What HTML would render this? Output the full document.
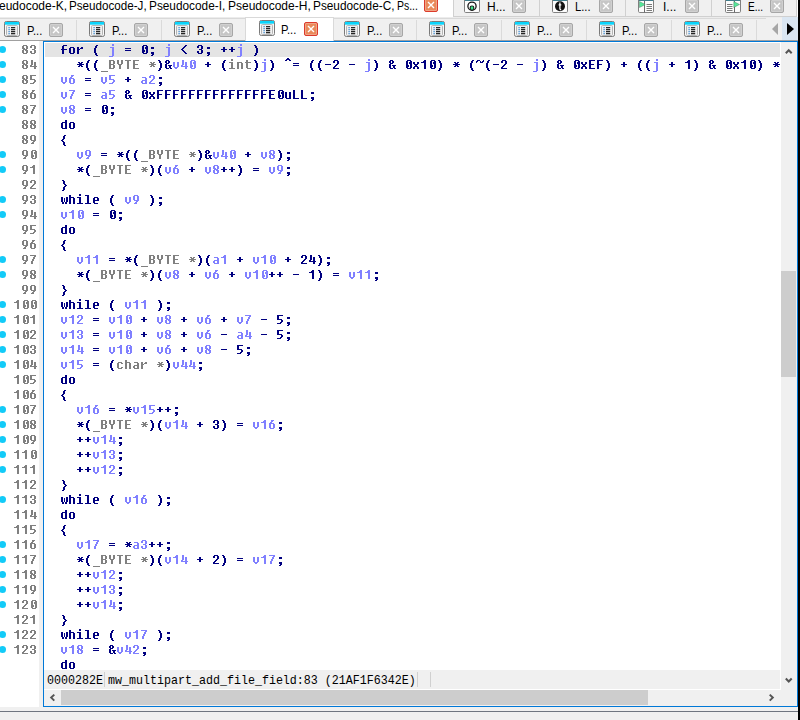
<!DOCTYPE html>
<html><head><meta charset="utf-8"><style>
*{margin:0;padding:0;box-sizing:border-box}
html,body{width:800px;height:720px;overflow:hidden;background:#f0f0f0;position:relative}
div,svg{position:absolute}
.ui{font-family:"Liberation Sans",sans-serif;font-size:12px;color:#000}
#top{left:0;top:0;width:800px;height:17px;background:#fff}
.title{top:-1px;white-space:nowrap;font-family:"Liberation Sans",sans-serif;font-size:12px;line-height:15px;color:#000}
.ttab{top:-4px;height:21px;background:#f0f0f0;border:1px solid #d0d0d0;border-top:none}
#row2{left:0;top:17px;width:800px;height:24px;background:#f0f0f0;border-top:1px solid #ececec}
#row2line{left:0;top:18px;width:766px;height:1px;background:#d9d9d9}
.sep{top:20px;width:1px;height:20px;background:#dadada}
.tt{font-family:"Liberation Sans",sans-serif;font-size:12px;line-height:14px;color:#000;white-space:nowrap}
.cb{width:14px;height:14px;background:#c6c6c6;border:1px solid #a6a6a6;border-radius:2px;box-shadow:inset 0 0 0 1px #d0d0d0}
.cb svg{left:-1px;top:-1px}
.cb.red{background:#e98a5a;border-color:#dc3b2b;box-shadow:inset 0 0 0 1px #f0a486}
.act2{left:245px;top:17px;width:89px;height:24px;background:#fff;border:1px solid #d9d9d9;border-bottom:none}
#hline{left:0;top:40px;width:798px;height:1px;background:#a0a0a0}
#frame{left:43px;top:41px;width:755px;height:666px;border:1px solid #0078d7;background:#fff}
#gut{left:0;top:41px;width:39px;height:666px;background:#fff}
#gstrip{left:39px;top:41px;width:4px;height:666px;background:#f0f0f0}
#black{left:798px;top:0;width:2px;height:720px;background:#000}
#bline{left:0;top:711px;width:798px;height:1px;background:#6f7580}
#code{left:45px;top:42px;width:735px;height:628px;overflow:hidden;background:#fff}
#hl{left:0;top:1px;width:735px;height:14px;background:#e4e4e4}
.cl{left:0;top:1px;font-family:"Liberation Mono",monospace;font-size:13.333px;line-height:15px;font-weight:bold;color:#000080;white-space:pre}
.ln{position:relative;height:15px}
.cl b{color:#6a6aff;font-weight:bold}
.cl i{color:#808080;font-style:normal}
#gnums{left:0;top:43px;width:37px;font-family:"Liberation Mono",monospace;font-size:13.333px;line-height:15px;font-weight:bold;color:#808080;text-align:right}
.gn{position:relative;height:15px}
.dot{left:-1px;width:7px;height:7px;border-radius:50%;background:#12cbf8}
#pix{left:0;top:0;width:800px;height:720px;clip-path:inset(42px 19px 50px 0)}
#vsb{left:781px;top:42px;width:16px;height:664px;background:#f0f0f0}
#thumb{left:781px;top:271px;width:15px;height:106px;background:#cdcdcd}
#status{left:44px;top:670px;width:736px;height:19px;background:#f0f0f0}
.st{top:674px;font-family:"Liberation Mono",monospace;font-size:11.667px;line-height:12px;transform:scaleY(1.06);transform-origin:0 0;color:#000;white-space:pre}
.ssep{top:672px;width:1px;height:15px;background:#d0d0d0}
#hsb{left:44px;top:690px;width:753px;height:16px;background:#f0f0f0}
#hthumb{left:61px;top:690px;width:587px;height:15px;background:#cdcdcd}
</style></head><body>
<div id="top"></div>
<div class="title" style="left:-15px">Pseudocode-K,</div><div class="title" style="left:69px;transform:scaleX(0.97);transform-origin:0 0">Pseudocode-J,</div><div class="title" style="left:149px;transform:scaleX(0.985);transform-origin:0 0">Pseudocode-I,</div><div class="title" style="left:228px">Pseudocode-H,</div><div class="title" style="left:313px;transform:scaleX(0.985);transform-origin:0 0">Pseudocode-C,</div><div class="title" style="left:396.5px;transform:scaleX(0.87);transform-origin:0 0">Ps...</div>
<div class="cb red" style="left:424px;top:-2px"><svg width="14" height="14" viewBox="0 0 14 14"><path d="M4 4L10 10M10 4L4 10" stroke="#fff" stroke-width="1.4"/></svg></div>
<div class="ttab" style="left:453px;width:87px"></div>
<div class="ttab" style="left:539px;width:87px"></div>
<div class="ttab" style="left:625px;width:87px"></div>
<div class="ttab" style="left:711px;width:86px"></div>
<div class="tt" style="left:487px;top:0px">H...</div>
<div class="tt" style="left:575px;top:0px;transform:scaleX(0.93);transform-origin:0 0">L...</div>
<div class="tt" style="left:663px;top:0px">I...</div>
<div class="tt" style="left:748px;top:0px;transform:scaleX(0.84);transform-origin:0 0">E...</div>
<div class="cb" style="left:512px;top:-1px"><svg width="14" height="14" viewBox="0 0 14 14"><path d="M4 4L10 10M10 4L4 10" stroke="#fff" stroke-width="1.4"/></svg></div><div class="cb" style="left:599px;top:-1px"><svg width="14" height="14" viewBox="0 0 14 14"><path d="M4 4L10 10M10 4L4 10" stroke="#fff" stroke-width="1.4"/></svg></div><div class="cb" style="left:685px;top:-1px"><svg width="14" height="14" viewBox="0 0 14 14"><path d="M4 4L10 10M10 4L4 10" stroke="#fff" stroke-width="1.4"/></svg></div><div class="cb" style="left:770px;top:-1px"><svg width="14" height="14" viewBox="0 0 14 14"><path d="M4 4L10 10M10 4L4 10" stroke="#fff" stroke-width="1.4"/></svg></div>
<svg style="left:464px;top:-3px" width="16" height="16" viewBox="0 0 16 16"><rect x="0.5" y="0.5" width="15" height="15" rx="1.2" fill="#fcfcfc" stroke="#808080"/><rect x="1" y="1" width="14" height="3" fill="#3f7d8c"/><circle cx="8" cy="9.2" r="4.1" fill="none" stroke="#151515" stroke-width="1.3"/><circle cx="8" cy="11" r="2.4" fill="#151515"/><ellipse cx="8" cy="11" rx="1.4" ry="1.8" fill="#3ee08a"/></svg>
<svg style="left:552px;top:-3px" width="16" height="16" viewBox="0 0 16 16"><rect x="0.5" y="0.5" width="15" height="15" rx="1.2" fill="#fcfcfc" stroke="#808080"/><rect x="1" y="1" width="14" height="3" fill="#3f7d8c"/><circle cx="8" cy="9.3" r="5" fill="#111"/><path d="M7.9 5.6V11.6Q7.9 12.8 9.2 12.6M6.6 7.8H9.3" fill="none" stroke="#fff" stroke-width="1.3"/></svg>
<svg style="left:638px;top:-3px" width="16" height="16" viewBox="0 0 16 16"><rect x="0.5" y="0.5" width="15" height="15" rx="1.2" fill="#fcfcfc" stroke="#808080"/><rect x="1" y="1" width="14" height="3" fill="#3f7d8c"/><path d="M6.5 4V15.5" stroke="#6a6a6a"/><path d="M1.5 4.5V10.5L7.2 7.5Z" fill="#55e89a" stroke="#3a6a50" stroke-width="0.4"/><path d="M8.5 7.5h5.5M8.5 9.5h5.5M8.5 11.5h5.5M8.5 13.5h5.5" stroke="#7a7a7a" stroke-width="1.1"/></svg>
<svg style="left:725px;top:-3px" width="16" height="16" viewBox="0 0 16 16"><rect x="0.5" y="0.5" width="15" height="15" rx="1.2" fill="#fcfcfc" stroke="#808080"/><rect x="1" y="1" width="14" height="3" fill="#3f7d8c"/><path d="M9.5 4V15.5" stroke="#6a6a6a"/><path d="M2 7.5h5.5M2 9.5h5.5M2 11.5h5.5M2 13.5h5.5" stroke="#7a7a7a" stroke-width="1.1"/><path d="M8.8 4.5V10.5L14.5 7.5Z" fill="#55e89a" stroke="#3a6a50" stroke-width="0.4"/></svg>
<div id="row2"></div>
<div id="row2line"></div>
<svg class="ic" style="left:4px;top:21px" width="16" height="16" viewBox="0 0 16 16">
<rect x="0.5" y="0.5" width="15" height="15" rx="1.8" fill="#fafafa" stroke="#7a7a7a"/>
<rect x="1" y="1" width="14" height="2.7" fill="#0ad4fb"/>
<rect x="2.5" y="4.5" width="11" height="10" rx="1" fill="#ececec" stroke="#b4b4b4"/>
<rect x="3.5" y="5.5" width="9" height="8" fill="#f3f3f3"/>
<rect x="4.3" y="5.95" width="1.6" height="1.4" rx="0.7" fill="#3a8ad0"/><rect x="7" y="6" width="4.2" height="1.3" fill="#262626"/><rect x="4.3" y="7.95" width="1.6" height="1.4" rx="0.7" fill="#3a8ad0"/><rect x="7" y="8" width="4.2" height="1.3" fill="#262626"/><rect x="4.3" y="9.95" width="1.6" height="1.4" rx="0.7" fill="#3a8ad0"/><rect x="7" y="10" width="4.2" height="1.3" fill="#262626"/><rect x="4.3" y="11.95" width="1.6" height="1.4" rx="0.7" fill="#3a8ad0"/><rect x="7" y="12" width="4.2" height="1.3" fill="#262626"/>
</svg><div class="tt" style="left:27px;top:24px;transform:scaleX(0.93);transform-origin:0 0">P...</div><div class="cb" style="left:49px;top:23px"><svg width="14" height="14" viewBox="0 0 14 14"><path d="M4 4L10 10M10 4L4 10" stroke="#fff" stroke-width="1.4"/></svg></div><div class="sep" style="left:76px"></div><svg class="ic" style="left:89px;top:21px" width="16" height="16" viewBox="0 0 16 16">
<rect x="0.5" y="0.5" width="15" height="15" rx="1.8" fill="#fafafa" stroke="#7a7a7a"/>
<rect x="1" y="1" width="14" height="2.7" fill="#0ad4fb"/>
<rect x="2.5" y="4.5" width="11" height="10" rx="1" fill="#ececec" stroke="#b4b4b4"/>
<rect x="3.5" y="5.5" width="9" height="8" fill="#f3f3f3"/>
<rect x="4.3" y="5.95" width="1.6" height="1.4" rx="0.7" fill="#3a8ad0"/><rect x="7" y="6" width="4.2" height="1.3" fill="#262626"/><rect x="4.3" y="7.95" width="1.6" height="1.4" rx="0.7" fill="#3a8ad0"/><rect x="7" y="8" width="4.2" height="1.3" fill="#262626"/><rect x="4.3" y="9.95" width="1.6" height="1.4" rx="0.7" fill="#3a8ad0"/><rect x="7" y="10" width="4.2" height="1.3" fill="#262626"/><rect x="4.3" y="11.95" width="1.6" height="1.4" rx="0.7" fill="#3a8ad0"/><rect x="7" y="12" width="4.2" height="1.3" fill="#262626"/>
</svg><div class="tt" style="left:112px;top:24px;transform:scaleX(0.93);transform-origin:0 0">P...</div><div class="cb" style="left:134px;top:23px"><svg width="14" height="14" viewBox="0 0 14 14"><path d="M4 4L10 10M10 4L4 10" stroke="#fff" stroke-width="1.4"/></svg></div><div class="sep" style="left:161px"></div><svg class="ic" style="left:174px;top:21px" width="16" height="16" viewBox="0 0 16 16">
<rect x="0.5" y="0.5" width="15" height="15" rx="1.8" fill="#fafafa" stroke="#7a7a7a"/>
<rect x="1" y="1" width="14" height="2.7" fill="#0ad4fb"/>
<rect x="2.5" y="4.5" width="11" height="10" rx="1" fill="#ececec" stroke="#b4b4b4"/>
<rect x="3.5" y="5.5" width="9" height="8" fill="#f3f3f3"/>
<rect x="4.3" y="5.95" width="1.6" height="1.4" rx="0.7" fill="#3a8ad0"/><rect x="7" y="6" width="4.2" height="1.3" fill="#262626"/><rect x="4.3" y="7.95" width="1.6" height="1.4" rx="0.7" fill="#3a8ad0"/><rect x="7" y="8" width="4.2" height="1.3" fill="#262626"/><rect x="4.3" y="9.95" width="1.6" height="1.4" rx="0.7" fill="#3a8ad0"/><rect x="7" y="10" width="4.2" height="1.3" fill="#262626"/><rect x="4.3" y="11.95" width="1.6" height="1.4" rx="0.7" fill="#3a8ad0"/><rect x="7" y="12" width="4.2" height="1.3" fill="#262626"/>
</svg><div class="tt" style="left:197px;top:24px;transform:scaleX(0.93);transform-origin:0 0">P...</div><div class="cb" style="left:219px;top:23px"><svg width="14" height="14" viewBox="0 0 14 14"><path d="M4 4L10 10M10 4L4 10" stroke="#fff" stroke-width="1.4"/></svg></div><svg class="ic" style="left:344px;top:21px" width="16" height="16" viewBox="0 0 16 16">
<rect x="0.5" y="0.5" width="15" height="15" rx="1.8" fill="#fafafa" stroke="#7a7a7a"/>
<rect x="1" y="1" width="14" height="2.7" fill="#0ad4fb"/>
<rect x="2.5" y="4.5" width="11" height="10" rx="1" fill="#ececec" stroke="#b4b4b4"/>
<rect x="3.5" y="5.5" width="9" height="8" fill="#f3f3f3"/>
<rect x="4.3" y="5.95" width="1.6" height="1.4" rx="0.7" fill="#3a8ad0"/><rect x="7" y="6" width="4.2" height="1.3" fill="#262626"/><rect x="4.3" y="7.95" width="1.6" height="1.4" rx="0.7" fill="#3a8ad0"/><rect x="7" y="8" width="4.2" height="1.3" fill="#262626"/><rect x="4.3" y="9.95" width="1.6" height="1.4" rx="0.7" fill="#3a8ad0"/><rect x="7" y="10" width="4.2" height="1.3" fill="#262626"/><rect x="4.3" y="11.95" width="1.6" height="1.4" rx="0.7" fill="#3a8ad0"/><rect x="7" y="12" width="4.2" height="1.3" fill="#262626"/>
</svg><div class="tt" style="left:367px;top:24px;transform:scaleX(0.93);transform-origin:0 0">P...</div><div class="cb" style="left:389px;top:23px"><svg width="14" height="14" viewBox="0 0 14 14"><path d="M4 4L10 10M10 4L4 10" stroke="#fff" stroke-width="1.4"/></svg></div><div class="sep" style="left:416px"></div><svg class="ic" style="left:429px;top:21px" width="16" height="16" viewBox="0 0 16 16">
<rect x="0.5" y="0.5" width="15" height="15" rx="1.8" fill="#fafafa" stroke="#7a7a7a"/>
<rect x="1" y="1" width="14" height="2.7" fill="#0ad4fb"/>
<rect x="2.5" y="4.5" width="11" height="10" rx="1" fill="#ececec" stroke="#b4b4b4"/>
<rect x="3.5" y="5.5" width="9" height="8" fill="#f3f3f3"/>
<rect x="4.3" y="5.95" width="1.6" height="1.4" rx="0.7" fill="#3a8ad0"/><rect x="7" y="6" width="4.2" height="1.3" fill="#262626"/><rect x="4.3" y="7.95" width="1.6" height="1.4" rx="0.7" fill="#3a8ad0"/><rect x="7" y="8" width="4.2" height="1.3" fill="#262626"/><rect x="4.3" y="9.95" width="1.6" height="1.4" rx="0.7" fill="#3a8ad0"/><rect x="7" y="10" width="4.2" height="1.3" fill="#262626"/><rect x="4.3" y="11.95" width="1.6" height="1.4" rx="0.7" fill="#3a8ad0"/><rect x="7" y="12" width="4.2" height="1.3" fill="#262626"/>
</svg><div class="tt" style="left:452px;top:24px;transform:scaleX(0.93);transform-origin:0 0">P...</div><div class="cb" style="left:474px;top:23px"><svg width="14" height="14" viewBox="0 0 14 14"><path d="M4 4L10 10M10 4L4 10" stroke="#fff" stroke-width="1.4"/></svg></div><div class="sep" style="left:501px"></div><svg class="ic" style="left:514px;top:21px" width="16" height="16" viewBox="0 0 16 16">
<rect x="0.5" y="0.5" width="15" height="15" rx="1.8" fill="#fafafa" stroke="#7a7a7a"/>
<rect x="1" y="1" width="14" height="2.7" fill="#0ad4fb"/>
<rect x="2.5" y="4.5" width="11" height="10" rx="1" fill="#ececec" stroke="#b4b4b4"/>
<rect x="3.5" y="5.5" width="9" height="8" fill="#f3f3f3"/>
<rect x="4.3" y="5.95" width="1.6" height="1.4" rx="0.7" fill="#3a8ad0"/><rect x="7" y="6" width="4.2" height="1.3" fill="#262626"/><rect x="4.3" y="7.95" width="1.6" height="1.4" rx="0.7" fill="#3a8ad0"/><rect x="7" y="8" width="4.2" height="1.3" fill="#262626"/><rect x="4.3" y="9.95" width="1.6" height="1.4" rx="0.7" fill="#3a8ad0"/><rect x="7" y="10" width="4.2" height="1.3" fill="#262626"/><rect x="4.3" y="11.95" width="1.6" height="1.4" rx="0.7" fill="#3a8ad0"/><rect x="7" y="12" width="4.2" height="1.3" fill="#262626"/>
</svg><div class="tt" style="left:537px;top:24px;transform:scaleX(0.93);transform-origin:0 0">P...</div><div class="cb" style="left:559px;top:23px"><svg width="14" height="14" viewBox="0 0 14 14"><path d="M4 4L10 10M10 4L4 10" stroke="#fff" stroke-width="1.4"/></svg></div><div class="sep" style="left:586px"></div><svg class="ic" style="left:599px;top:21px" width="16" height="16" viewBox="0 0 16 16">
<rect x="0.5" y="0.5" width="15" height="15" rx="1.8" fill="#fafafa" stroke="#7a7a7a"/>
<rect x="1" y="1" width="14" height="2.7" fill="#0ad4fb"/>
<rect x="2.5" y="4.5" width="11" height="10" rx="1" fill="#ececec" stroke="#b4b4b4"/>
<rect x="3.5" y="5.5" width="9" height="8" fill="#f3f3f3"/>
<rect x="4.3" y="5.95" width="1.6" height="1.4" rx="0.7" fill="#3a8ad0"/><rect x="7" y="6" width="4.2" height="1.3" fill="#262626"/><rect x="4.3" y="7.95" width="1.6" height="1.4" rx="0.7" fill="#3a8ad0"/><rect x="7" y="8" width="4.2" height="1.3" fill="#262626"/><rect x="4.3" y="9.95" width="1.6" height="1.4" rx="0.7" fill="#3a8ad0"/><rect x="7" y="10" width="4.2" height="1.3" fill="#262626"/><rect x="4.3" y="11.95" width="1.6" height="1.4" rx="0.7" fill="#3a8ad0"/><rect x="7" y="12" width="4.2" height="1.3" fill="#262626"/>
</svg><div class="tt" style="left:622px;top:24px;transform:scaleX(0.93);transform-origin:0 0">P...</div><div class="cb" style="left:644px;top:23px"><svg width="14" height="14" viewBox="0 0 14 14"><path d="M4 4L10 10M10 4L4 10" stroke="#fff" stroke-width="1.4"/></svg></div><div class="sep" style="left:671px"></div><svg class="ic" style="left:684px;top:21px" width="16" height="16" viewBox="0 0 16 16">
<rect x="0.5" y="0.5" width="15" height="15" rx="1.8" fill="#fafafa" stroke="#7a7a7a"/>
<rect x="1" y="1" width="14" height="2.7" fill="#0ad4fb"/>
<rect x="2.5" y="4.5" width="11" height="10" rx="1" fill="#ececec" stroke="#b4b4b4"/>
<rect x="3.5" y="5.5" width="9" height="8" fill="#f3f3f3"/>
<rect x="4.3" y="5.95" width="1.6" height="1.4" rx="0.7" fill="#3a8ad0"/><rect x="7" y="6" width="4.2" height="1.3" fill="#262626"/><rect x="4.3" y="7.95" width="1.6" height="1.4" rx="0.7" fill="#3a8ad0"/><rect x="7" y="8" width="4.2" height="1.3" fill="#262626"/><rect x="4.3" y="9.95" width="1.6" height="1.4" rx="0.7" fill="#3a8ad0"/><rect x="7" y="10" width="4.2" height="1.3" fill="#262626"/><rect x="4.3" y="11.95" width="1.6" height="1.4" rx="0.7" fill="#3a8ad0"/><rect x="7" y="12" width="4.2" height="1.3" fill="#262626"/>
</svg><div class="tt" style="left:707px;top:24px;transform:scaleX(0.93);transform-origin:0 0">P...</div><div class="cb" style="left:729px;top:23px"><svg width="14" height="14" viewBox="0 0 14 14"><path d="M4 4L10 10M10 4L4 10" stroke="#fff" stroke-width="1.4"/></svg></div><div class="sep" style="left:756px"></div>
<div id="hline"></div>
<div class="act2"></div><svg class="ic" style="left:259px;top:20px" width="16" height="16" viewBox="0 0 16 16">
<rect x="0.5" y="0.5" width="15" height="15" rx="1.8" fill="#fafafa" stroke="#7a7a7a"/>
<rect x="1" y="1" width="14" height="2.7" fill="#0ad4fb"/>
<rect x="2.5" y="4.5" width="11" height="10" rx="1" fill="#ececec" stroke="#b4b4b4"/>
<rect x="3.5" y="5.5" width="9" height="8" fill="#f3f3f3"/>
<rect x="4.3" y="5.95" width="1.6" height="1.4" rx="0.7" fill="#3a8ad0"/><rect x="7" y="6" width="4.2" height="1.3" fill="#262626"/><rect x="4.3" y="7.95" width="1.6" height="1.4" rx="0.7" fill="#3a8ad0"/><rect x="7" y="8" width="4.2" height="1.3" fill="#262626"/><rect x="4.3" y="9.95" width="1.6" height="1.4" rx="0.7" fill="#3a8ad0"/><rect x="7" y="10" width="4.2" height="1.3" fill="#262626"/><rect x="4.3" y="11.95" width="1.6" height="1.4" rx="0.7" fill="#3a8ad0"/><rect x="7" y="12" width="4.2" height="1.3" fill="#262626"/>
</svg><div class="tt" style="left:281px;top:23px;transform:scaleX(0.93);transform-origin:0 0">P...</div><div class="cb red" style="left:304px;top:22px"><svg width="14" height="14" viewBox="0 0 14 14"><path d="M4 4L10 10M10 4L4 10" stroke="#fff" stroke-width="1.4"/></svg></div>
<div style="left:772px;top:23px;width:0;height:0;border-top:6px solid transparent;border-bottom:6px solid transparent;border-right:6px solid #a6a6a6"></div>
<div style="left:782px;top:17px;width:16px;height:23px;background:#dae6f2"></div>
<div style="left:787px;top:23px;width:0;height:0;border-top:6px solid transparent;border-bottom:6px solid transparent;border-left:7px solid #000"></div>
<div id="gut"></div>
<div id="gstrip"></div>
<div id="frame"></div>
<div id="code"><div id="hl"></div></div>
<svg id="pix" width="800" height="720" viewBox="0 0 800 720" shape-rendering="crispEdges"><defs><path id="g0" d="M1 3h3v1h-3zM0 4h2v1h-2zM3 4h2v1h-2zM0 5h2v1h-2zM3 5h2v1h-2zM1 6h3v1h-3zM0 7h2v1h-2zM0 8h2v1h-2zM3 8h4v1h-4zM0 9h2v1h-2zM4 9h2v1h-2zM0 10h2v1h-2zM4 10h2v1h-2zM1 11h3v1h-3zM5 11h2v1h-2z"/><path id="g1" d="M3 3h2v1h-2zM2 4h2v1h-2zM2 5h2v1h-2zM1 6h2v1h-2zM1 7h2v1h-2zM1 8h2v1h-2zM1 9h2v1h-2zM1 10h2v1h-2zM2 11h2v1h-2zM2 12h2v1h-2zM3 13h2v1h-2z"/><path id="g2" d="M1 3h2v1h-2zM2 4h2v1h-2zM2 5h2v1h-2zM3 6h2v1h-2zM3 7h2v1h-2zM3 8h2v1h-2zM3 9h2v1h-2zM3 10h2v1h-2zM2 11h2v1h-2zM2 12h2v1h-2zM1 13h2v1h-2z"/><path id="g3" d="M1 5h2v1h-2zM4 5h2v1h-2zM2 6h3v1h-3zM0 7h7v1h-7zM2 8h3v1h-3zM1 9h2v1h-2zM4 9h2v1h-2z"/><path id="g4" d="M2 5h2v1h-2zM2 6h2v1h-2zM0 7h6v1h-6zM2 8h2v1h-2zM2 9h2v1h-2z"/><path id="g5" d="M0 7h6v1h-6z"/><path id="g6" d="M2 3h4v1h-4zM1 4h2v1h-2zM5 4h2v1h-2zM1 5h2v1h-2zM4 5h3v1h-3zM1 6h2v1h-2zM4 6h3v1h-3zM1 7h2v1h-2zM5 7h2v1h-2zM1 8h3v1h-3zM5 8h2v1h-2zM1 9h3v1h-3zM5 9h2v1h-2zM1 10h2v1h-2zM5 10h2v1h-2zM2 11h4v1h-4z"/><path id="g7" d="M3 3h2v1h-2zM2 4h3v1h-3zM0 5h5v1h-5zM3 6h2v1h-2zM3 7h2v1h-2zM3 8h2v1h-2zM3 9h2v1h-2zM3 10h2v1h-2zM3 11h2v1h-2z"/><path id="g8" d="M1 3h4v1h-4zM0 4h2v1h-2zM4 4h2v1h-2zM0 5h2v1h-2zM4 5h2v1h-2zM4 6h2v1h-2zM3 7h2v1h-2zM2 8h2v1h-2zM1 9h2v1h-2zM0 10h2v1h-2zM0 11h6v1h-6z"/><path id="g9" d="M1 3h4v1h-4zM0 4h2v1h-2zM4 4h2v1h-2zM0 5h2v1h-2zM4 5h2v1h-2zM4 6h2v1h-2zM2 7h3v1h-3zM4 8h2v1h-2zM0 9h2v1h-2zM4 9h2v1h-2zM0 10h2v1h-2zM4 10h2v1h-2zM1 11h4v1h-4z"/><path id="g10" d="M1 3h2v1h-2zM1 4h2v1h-2zM1 5h2v1h-2zM4 5h2v1h-2zM1 6h2v1h-2zM4 6h2v1h-2zM1 7h2v1h-2zM4 7h2v1h-2zM0 8h2v1h-2zM4 8h2v1h-2zM0 9h7v1h-7zM4 10h2v1h-2zM4 11h2v1h-2z"/><path id="g11" d="M0 3h6v1h-6zM0 4h2v1h-2zM0 5h2v1h-2zM0 6h2v1h-2zM0 7h5v1h-5zM4 8h2v1h-2zM4 9h2v1h-2zM3 10h2v1h-2zM0 11h4v1h-4z"/><path id="g12" d="M2 3h3v1h-3zM2 4h2v1h-2zM1 5h2v1h-2zM0 6h5v1h-5zM0 7h2v1h-2zM4 7h2v1h-2zM0 8h2v1h-2zM4 8h2v1h-2zM0 9h2v1h-2zM4 9h2v1h-2zM0 10h2v1h-2zM4 10h2v1h-2zM1 11h4v1h-4z"/><path id="g13" d="M0 3h6v1h-6zM4 4h2v1h-2zM3 5h2v1h-2zM3 6h2v1h-2zM2 7h2v1h-2zM2 8h2v1h-2zM1 9h2v1h-2zM1 10h2v1h-2zM1 11h2v1h-2z"/><path id="g14" d="M1 3h4v1h-4zM0 4h2v1h-2zM4 4h2v1h-2zM0 5h2v1h-2zM4 5h2v1h-2zM0 6h3v1h-3zM4 6h2v1h-2zM1 7h4v1h-4zM0 8h2v1h-2zM3 8h3v1h-3zM0 9h2v1h-2zM4 9h2v1h-2zM0 10h2v1h-2zM4 10h2v1h-2zM1 11h4v1h-4z"/><path id="g15" d="M1 3h4v1h-4zM0 4h2v1h-2zM4 4h2v1h-2zM0 5h2v1h-2zM4 5h2v1h-2zM0 6h2v1h-2zM4 6h2v1h-2zM0 7h2v1h-2zM4 7h2v1h-2zM1 8h5v1h-5zM3 9h2v1h-2zM2 10h2v1h-2zM1 11h3v1h-3z"/><path id="g16" d="M2 5h3v1h-3zM2 6h3v1h-3zM2 10h3v1h-3zM2 11h3v1h-3zM3 12h2v1h-2zM2 13h2v1h-2z"/><path id="g17" d="M4 3h2v1h-2zM3 4h2v1h-2zM2 5h2v1h-2zM1 6h2v1h-2zM0 7h2v1h-2zM1 8h2v1h-2zM2 9h2v1h-2zM3 10h2v1h-2zM4 11h2v1h-2z"/><path id="g18" d="M0 6h6v1h-6zM0 8h6v1h-6z"/><path id="g19" d="M0 3h5v1h-5zM0 4h2v1h-2zM4 4h2v1h-2zM0 5h2v1h-2zM4 5h2v1h-2zM0 6h2v1h-2zM4 6h2v1h-2zM0 7h5v1h-5zM0 8h2v1h-2zM4 8h2v1h-2zM0 9h2v1h-2zM4 9h2v1h-2zM0 10h2v1h-2zM4 10h2v1h-2zM0 11h5v1h-5z"/><path id="g20" d="M0 3h6v1h-6zM0 4h2v1h-2zM0 5h2v1h-2zM0 6h2v1h-2zM0 7h5v1h-5zM0 8h2v1h-2zM0 9h2v1h-2zM0 10h2v1h-2zM0 11h6v1h-6z"/><path id="g21" d="M0 3h6v1h-6zM0 4h2v1h-2zM0 5h2v1h-2zM0 6h2v1h-2zM0 7h5v1h-5zM0 8h2v1h-2zM0 9h2v1h-2zM0 10h2v1h-2zM0 11h2v1h-2z"/><path id="g22" d="M0 3h2v1h-2zM0 4h2v1h-2zM0 5h2v1h-2zM0 6h2v1h-2zM0 7h2v1h-2zM0 8h2v1h-2zM0 9h2v1h-2zM0 10h2v1h-2zM0 11h6v1h-6z"/><path id="g23" d="M0 3h6v1h-6zM2 4h2v1h-2zM2 5h2v1h-2zM2 6h2v1h-2zM2 7h2v1h-2zM2 8h2v1h-2zM2 9h2v1h-2zM2 10h2v1h-2zM2 11h2v1h-2z"/><path id="g24" d="M0 3h2v1h-2zM4 3h2v1h-2zM0 4h2v1h-2zM4 4h2v1h-2zM0 5h2v1h-2zM4 5h2v1h-2zM0 6h2v1h-2zM4 6h2v1h-2zM1 7h4v1h-4zM2 8h2v1h-2zM2 9h2v1h-2zM2 10h2v1h-2zM2 11h2v1h-2z"/><path id="g25" d="M2 1h2v1h-2zM1 2h4v1h-4zM0 3h2v1h-2zM4 3h2v1h-2z"/><path id="g26" d="M0 14h7v1h-7z"/><path id="g27" d="M1 5h4v1h-4zM4 6h2v1h-2zM4 7h2v1h-2zM1 8h5v1h-5zM0 9h2v1h-2zM4 9h2v1h-2zM0 10h2v1h-2zM4 10h2v1h-2zM1 11h5v1h-5z"/><path id="g28" d="M1 5h4v1h-4zM0 6h2v1h-2zM4 6h2v1h-2zM0 7h2v1h-2zM0 8h2v1h-2zM0 9h2v1h-2zM0 10h2v1h-2zM4 10h2v1h-2zM1 11h4v1h-4z"/><path id="g29" d="M4 3h2v1h-2zM4 4h2v1h-2zM1 5h5v1h-5zM0 6h2v1h-2zM4 6h2v1h-2zM0 7h2v1h-2zM4 7h2v1h-2zM0 8h2v1h-2zM4 8h2v1h-2zM0 9h2v1h-2zM4 9h2v1h-2zM0 10h2v1h-2zM4 10h2v1h-2zM1 11h5v1h-5z"/><path id="g30" d="M1 5h4v1h-4zM0 6h2v1h-2zM4 6h2v1h-2zM0 7h2v1h-2zM4 7h2v1h-2zM0 8h6v1h-6zM0 9h2v1h-2zM0 10h2v1h-2zM1 11h4v1h-4z"/><path id="g31" d="M2 3h4v1h-4zM1 4h2v1h-2zM1 5h2v1h-2zM1 6h2v1h-2zM0 7h6v1h-6zM1 8h2v1h-2zM1 9h2v1h-2zM1 10h2v1h-2zM1 11h2v1h-2z"/><path id="g32" d="M0 3h2v1h-2zM0 4h2v1h-2zM0 5h5v1h-5zM0 6h2v1h-2zM4 6h2v1h-2zM0 7h2v1h-2zM4 7h2v1h-2zM0 8h2v1h-2zM4 8h2v1h-2zM0 9h2v1h-2zM4 9h2v1h-2zM0 10h2v1h-2zM4 10h2v1h-2zM0 11h2v1h-2zM4 11h2v1h-2z"/><path id="g33" d="M2 2h2v1h-2zM2 3h2v1h-2zM0 5h4v1h-4zM2 6h2v1h-2zM2 7h2v1h-2zM2 8h2v1h-2zM2 9h2v1h-2zM2 10h2v1h-2zM0 11h6v1h-6z"/><path id="g34" d="M3 2h2v1h-2zM3 3h2v1h-2zM1 5h4v1h-4zM3 6h2v1h-2zM3 7h2v1h-2zM3 8h2v1h-2zM3 9h2v1h-2zM3 10h2v1h-2zM3 11h2v1h-2zM3 12h2v1h-2zM3 13h2v1h-2zM0 14h4v1h-4z"/><path id="g35" d="M0 3h4v1h-4zM2 4h2v1h-2zM2 5h2v1h-2zM2 6h2v1h-2zM2 7h2v1h-2zM2 8h2v1h-2zM2 9h2v1h-2zM2 10h2v1h-2zM0 11h6v1h-6z"/><path id="g36" d="M0 5h5v1h-5zM0 6h2v1h-2zM4 6h2v1h-2zM0 7h2v1h-2zM4 7h2v1h-2zM0 8h2v1h-2zM4 8h2v1h-2zM0 9h2v1h-2zM4 9h2v1h-2zM0 10h2v1h-2zM4 10h2v1h-2zM0 11h2v1h-2zM4 11h2v1h-2z"/><path id="g37" d="M1 5h4v1h-4zM0 6h2v1h-2zM4 6h2v1h-2zM0 7h2v1h-2zM4 7h2v1h-2zM0 8h2v1h-2zM4 8h2v1h-2zM0 9h2v1h-2zM4 9h2v1h-2zM0 10h2v1h-2zM4 10h2v1h-2zM1 11h4v1h-4z"/><path id="g38" d="M0 5h2v1h-2zM4 5h2v1h-2zM0 6h2v1h-2zM3 6h3v1h-3zM0 7h3v1h-3zM0 8h2v1h-2zM0 9h2v1h-2zM0 10h2v1h-2zM0 11h2v1h-2z"/><path id="g39" d="M1 3h2v1h-2zM1 4h2v1h-2zM0 5h6v1h-6zM1 6h2v1h-2zM1 7h2v1h-2zM1 8h2v1h-2zM1 9h2v1h-2zM1 10h2v1h-2zM2 11h4v1h-4z"/><path id="g40" d="M0 5h2v1h-2zM4 5h2v1h-2zM0 6h2v1h-2zM4 6h2v1h-2zM0 7h2v1h-2zM4 7h2v1h-2zM0 8h2v1h-2zM4 8h2v1h-2zM0 9h2v1h-2zM4 9h2v1h-2zM0 10h2v1h-2zM4 10h2v1h-2zM1 11h5v1h-5z"/><path id="g41" d="M0 5h2v1h-2zM4 5h2v1h-2zM0 6h2v1h-2zM4 6h2v1h-2zM0 7h2v1h-2zM4 7h2v1h-2zM0 8h2v1h-2zM4 8h2v1h-2zM0 9h2v1h-2zM4 9h2v1h-2zM1 10h4v1h-4zM2 11h2v1h-2z"/><path id="g42" d="M0 5h2v1h-2zM5 5h2v1h-2zM0 6h2v1h-2zM3 6h1v1h-1zM5 6h2v1h-2zM0 7h2v1h-2zM3 7h1v1h-1zM5 7h2v1h-2zM0 8h2v1h-2zM3 8h1v1h-1zM5 8h2v1h-2zM0 9h2v1h-2zM3 9h1v1h-1zM5 9h2v1h-2zM1 10h2v1h-2zM4 10h2v1h-2zM1 11h2v1h-2zM4 11h2v1h-2z"/><path id="g43" d="M0 5h2v1h-2zM4 5h2v1h-2zM0 6h2v1h-2zM4 6h2v1h-2zM1 7h4v1h-4zM2 8h2v1h-2zM1 9h4v1h-4zM0 10h2v1h-2zM4 10h2v1h-2zM0 11h2v1h-2zM4 11h2v1h-2z"/><path id="g44" d="M3 3h2v1h-2zM2 4h2v1h-2zM2 5h2v1h-2zM2 6h2v1h-2zM1 7h2v1h-2zM0 8h2v1h-2zM1 9h2v1h-2zM2 10h2v1h-2zM2 11h2v1h-2zM2 12h2v1h-2zM3 13h2v1h-2z"/><path id="g45" d="M1 3h2v1h-2zM2 4h2v1h-2zM2 5h2v1h-2zM2 6h2v1h-2zM3 7h2v1h-2zM4 8h2v1h-2zM3 9h2v1h-2zM2 10h2v1h-2zM2 11h2v1h-2zM2 12h2v1h-2zM1 13h2v1h-2z"/><path id="g46" d="M0 3h3v1h-3zM6 3h1v1h-1zM-1 4h2v1h-2zM3 4h1v1h-1zM5 4h2v1h-2zM-1 5h1v1h-1zM3 5h3v1h-3z"/></defs><g fill="#000080"><use href="#g31" x="61" y="42"/><use href="#g37" x="69" y="42"/><use href="#g38" x="77" y="42"/><use href="#g1" x="93" y="42"/><use href="#g18" x="125" y="42"/><use href="#g6" x="141" y="42"/><use href="#g16" x="149" y="42"/><use href="#g17" x="181" y="42"/><use href="#g9" x="197" y="42"/><use href="#g16" x="205" y="42"/><use href="#g4" x="221" y="42"/><use href="#g4" x="229" y="42"/><use href="#g2" x="253" y="42"/><use href="#g3" x="77" y="57"/><use href="#g1" x="85" y="57"/><use href="#g1" x="93" y="57"/><use href="#g2" x="157" y="57"/><use href="#g0" x="165" y="57"/><use href="#g4" x="205" y="57"/><use href="#g1" x="221" y="57"/><use href="#g2" x="253" y="57"/><use href="#g2" x="269" y="57"/><use href="#g25" x="285" y="57"/><use href="#g18" x="293" y="57"/><use href="#g1" x="309" y="57"/><use href="#g1" x="317" y="57"/><use href="#g5" x="325" y="57"/><use href="#g8" x="333" y="57"/><use href="#g5" x="349" y="57"/><use href="#g2" x="373" y="57"/><use href="#g0" x="389" y="57"/><use href="#g6" x="405" y="57"/><use href="#g43" x="413" y="57"/><use href="#g7" x="421" y="57"/><use href="#g6" x="429" y="57"/><use href="#g2" x="437" y="57"/><use href="#g3" x="453" y="57"/><use href="#g1" x="469" y="57"/><use href="#g46" x="477" y="57"/><use href="#g1" x="485" y="57"/><use href="#g5" x="493" y="57"/><use href="#g8" x="501" y="57"/><use href="#g5" x="517" y="57"/><use href="#g2" x="541" y="57"/><use href="#g0" x="557" y="57"/><use href="#g6" x="573" y="57"/><use href="#g43" x="581" y="57"/><use href="#g20" x="589" y="57"/><use href="#g21" x="597" y="57"/><use href="#g2" x="605" y="57"/><use href="#g4" x="621" y="57"/><use href="#g1" x="637" y="57"/><use href="#g1" x="645" y="57"/><use href="#g4" x="669" y="57"/><use href="#g7" x="685" y="57"/><use href="#g2" x="693" y="57"/><use href="#g0" x="709" y="57"/><use href="#g6" x="725" y="57"/><use href="#g43" x="733" y="57"/><use href="#g7" x="741" y="57"/><use href="#g6" x="749" y="57"/><use href="#g2" x="757" y="57"/><use href="#g3" x="773" y="57"/><use href="#g1" x="789" y="57"/><use href="#g18" x="85" y="72"/><use href="#g4" x="125" y="72"/><use href="#g16" x="157" y="72"/><use href="#g18" x="85" y="87"/><use href="#g0" x="125" y="87"/><use href="#g6" x="141" y="87"/><use href="#g43" x="149" y="87"/><use href="#g21" x="157" y="87"/><use href="#g21" x="165" y="87"/><use href="#g21" x="173" y="87"/><use href="#g21" x="181" y="87"/><use href="#g21" x="189" y="87"/><use href="#g21" x="197" y="87"/><use href="#g21" x="205" y="87"/><use href="#g21" x="213" y="87"/><use href="#g21" x="221" y="87"/><use href="#g21" x="229" y="87"/><use href="#g21" x="237" y="87"/><use href="#g21" x="245" y="87"/><use href="#g21" x="253" y="87"/><use href="#g21" x="261" y="87"/><use href="#g20" x="269" y="87"/><use href="#g6" x="277" y="87"/><use href="#g40" x="285" y="87"/><use href="#g22" x="293" y="87"/><use href="#g22" x="301" y="87"/><use href="#g16" x="309" y="87"/><use href="#g18" x="85" y="102"/><use href="#g6" x="101" y="102"/><use href="#g16" x="109" y="102"/><use href="#g29" x="61" y="117"/><use href="#g37" x="69" y="117"/><use href="#g44" x="61" y="132"/><use href="#g18" x="101" y="147"/><use href="#g3" x="117" y="147"/><use href="#g1" x="125" y="147"/><use href="#g1" x="133" y="147"/><use href="#g2" x="197" y="147"/><use href="#g0" x="205" y="147"/><use href="#g4" x="245" y="147"/><use href="#g2" x="277" y="147"/><use href="#g16" x="285" y="147"/><use href="#g3" x="77" y="162"/><use href="#g1" x="85" y="162"/><use href="#g2" x="149" y="162"/><use href="#g1" x="157" y="162"/><use href="#g4" x="189" y="162"/><use href="#g4" x="221" y="162"/><use href="#g4" x="229" y="162"/><use href="#g2" x="237" y="162"/><use href="#g18" x="253" y="162"/><use href="#g16" x="285" y="162"/><use href="#g45" x="61" y="177"/><use href="#g42" x="61" y="192"/><use href="#g32" x="69" y="192"/><use href="#g33" x="77" y="192"/><use href="#g35" x="85" y="192"/><use href="#g30" x="93" y="192"/><use href="#g1" x="109" y="192"/><use href="#g2" x="149" y="192"/><use href="#g16" x="157" y="192"/><use href="#g18" x="93" y="207"/><use href="#g6" x="109" y="207"/><use href="#g16" x="117" y="207"/><use href="#g29" x="61" y="222"/><use href="#g37" x="69" y="222"/><use href="#g44" x="61" y="237"/><use href="#g18" x="109" y="252"/><use href="#g3" x="125" y="252"/><use href="#g1" x="133" y="252"/><use href="#g2" x="197" y="252"/><use href="#g1" x="205" y="252"/><use href="#g4" x="237" y="252"/><use href="#g4" x="285" y="252"/><use href="#g8" x="301" y="252"/><use href="#g10" x="309" y="252"/><use href="#g2" x="317" y="252"/><use href="#g16" x="325" y="252"/><use href="#g3" x="77" y="267"/><use href="#g1" x="85" y="267"/><use href="#g2" x="149" y="267"/><use href="#g1" x="157" y="267"/><use href="#g4" x="189" y="267"/><use href="#g4" x="229" y="267"/><use href="#g4" x="269" y="267"/><use href="#g4" x="277" y="267"/><use href="#g5" x="293" y="267"/><use href="#g7" x="309" y="267"/><use href="#g2" x="317" y="267"/><use href="#g18" x="333" y="267"/><use href="#g16" x="373" y="267"/><use href="#g45" x="61" y="282"/><use href="#g42" x="61" y="297"/><use href="#g32" x="69" y="297"/><use href="#g33" x="77" y="297"/><use href="#g35" x="85" y="297"/><use href="#g30" x="93" y="297"/><use href="#g1" x="109" y="297"/><use href="#g2" x="157" y="297"/><use href="#g16" x="165" y="297"/><use href="#g18" x="93" y="312"/><use href="#g4" x="141" y="312"/><use href="#g4" x="181" y="312"/><use href="#g4" x="221" y="312"/><use href="#g5" x="261" y="312"/><use href="#g11" x="277" y="312"/><use href="#g16" x="285" y="312"/><use href="#g18" x="93" y="327"/><use href="#g4" x="141" y="327"/><use href="#g4" x="181" y="327"/><use href="#g5" x="221" y="327"/><use href="#g5" x="261" y="327"/><use href="#g11" x="277" y="327"/><use href="#g16" x="285" y="327"/><use href="#g18" x="93" y="342"/><use href="#g4" x="141" y="342"/><use href="#g4" x="181" y="342"/><use href="#g5" x="221" y="342"/><use href="#g11" x="237" y="342"/><use href="#g16" x="245" y="342"/><use href="#g18" x="93" y="357"/><use href="#g1" x="109" y="357"/><use href="#g2" x="165" y="357"/><use href="#g16" x="197" y="357"/><use href="#g29" x="61" y="372"/><use href="#g37" x="69" y="372"/><use href="#g44" x="61" y="387"/><use href="#g18" x="109" y="402"/><use href="#g3" x="125" y="402"/><use href="#g4" x="157" y="402"/><use href="#g4" x="165" y="402"/><use href="#g16" x="173" y="402"/><use href="#g3" x="77" y="417"/><use href="#g1" x="85" y="417"/><use href="#g2" x="149" y="417"/><use href="#g1" x="157" y="417"/><use href="#g4" x="197" y="417"/><use href="#g9" x="213" y="417"/><use href="#g2" x="221" y="417"/><use href="#g18" x="237" y="417"/><use href="#g16" x="277" y="417"/><use href="#g4" x="77" y="432"/><use href="#g4" x="85" y="432"/><use href="#g16" x="117" y="432"/><use href="#g4" x="77" y="447"/><use href="#g4" x="85" y="447"/><use href="#g16" x="117" y="447"/><use href="#g4" x="77" y="462"/><use href="#g4" x="85" y="462"/><use href="#g16" x="117" y="462"/><use href="#g45" x="61" y="477"/><use href="#g42" x="61" y="492"/><use href="#g32" x="69" y="492"/><use href="#g33" x="77" y="492"/><use href="#g35" x="85" y="492"/><use href="#g30" x="93" y="492"/><use href="#g1" x="109" y="492"/><use href="#g2" x="157" y="492"/><use href="#g16" x="165" y="492"/><use href="#g29" x="61" y="507"/><use href="#g37" x="69" y="507"/><use href="#g44" x="61" y="522"/><use href="#g18" x="109" y="537"/><use href="#g3" x="125" y="537"/><use href="#g4" x="149" y="537"/><use href="#g4" x="157" y="537"/><use href="#g16" x="165" y="537"/><use href="#g3" x="77" y="552"/><use href="#g1" x="85" y="552"/><use href="#g2" x="149" y="552"/><use href="#g1" x="157" y="552"/><use href="#g4" x="197" y="552"/><use href="#g8" x="213" y="552"/><use href="#g2" x="221" y="552"/><use href="#g18" x="237" y="552"/><use href="#g16" x="277" y="552"/><use href="#g4" x="77" y="567"/><use href="#g4" x="85" y="567"/><use href="#g16" x="117" y="567"/><use href="#g4" x="77" y="582"/><use href="#g4" x="85" y="582"/><use href="#g16" x="117" y="582"/><use href="#g4" x="77" y="597"/><use href="#g4" x="85" y="597"/><use href="#g16" x="117" y="597"/><use href="#g45" x="61" y="612"/><use href="#g42" x="61" y="627"/><use href="#g32" x="69" y="627"/><use href="#g33" x="77" y="627"/><use href="#g35" x="85" y="627"/><use href="#g30" x="93" y="627"/><use href="#g1" x="109" y="627"/><use href="#g2" x="157" y="627"/><use href="#g16" x="165" y="627"/><use href="#g18" x="93" y="642"/><use href="#g0" x="109" y="642"/><use href="#g16" x="141" y="642"/><use href="#g29" x="61" y="657"/><use href="#g37" x="69" y="657"/></g><g fill="#8080ff"><use href="#g34" x="109" y="42"/><use href="#g34" x="165" y="42"/><use href="#g34" x="237" y="42"/><use href="#g41" x="173" y="57"/><use href="#g10" x="181" y="57"/><use href="#g6" x="189" y="57"/><use href="#g34" x="261" y="57"/><use href="#g34" x="365" y="57"/><use href="#g34" x="533" y="57"/><use href="#g34" x="653" y="57"/><use href="#g41" x="61" y="72"/><use href="#g12" x="69" y="72"/><use href="#g41" x="101" y="72"/><use href="#g11" x="109" y="72"/><use href="#g27" x="141" y="72"/><use href="#g8" x="149" y="72"/><use href="#g41" x="61" y="87"/><use href="#g13" x="69" y="87"/><use href="#g27" x="101" y="87"/><use href="#g11" x="109" y="87"/><use href="#g41" x="61" y="102"/><use href="#g14" x="69" y="102"/><use href="#g41" x="77" y="147"/><use href="#g15" x="85" y="147"/><use href="#g41" x="213" y="147"/><use href="#g10" x="221" y="147"/><use href="#g6" x="229" y="147"/><use href="#g41" x="261" y="147"/><use href="#g14" x="269" y="147"/><use href="#g41" x="165" y="162"/><use href="#g12" x="173" y="162"/><use href="#g41" x="205" y="162"/><use href="#g14" x="213" y="162"/><use href="#g41" x="269" y="162"/><use href="#g15" x="277" y="162"/><use href="#g41" x="125" y="192"/><use href="#g15" x="133" y="192"/><use href="#g41" x="61" y="207"/><use href="#g7" x="69" y="207"/><use href="#g6" x="77" y="207"/><use href="#g41" x="77" y="252"/><use href="#g7" x="85" y="252"/><use href="#g7" x="93" y="252"/><use href="#g27" x="213" y="252"/><use href="#g7" x="221" y="252"/><use href="#g41" x="253" y="252"/><use href="#g7" x="261" y="252"/><use href="#g6" x="269" y="252"/><use href="#g41" x="165" y="267"/><use href="#g14" x="173" y="267"/><use href="#g41" x="205" y="267"/><use href="#g12" x="213" y="267"/><use href="#g41" x="245" y="267"/><use href="#g7" x="253" y="267"/><use href="#g6" x="261" y="267"/><use href="#g41" x="349" y="267"/><use href="#g7" x="357" y="267"/><use href="#g7" x="365" y="267"/><use href="#g41" x="125" y="297"/><use href="#g7" x="133" y="297"/><use href="#g7" x="141" y="297"/><use href="#g41" x="61" y="312"/><use href="#g7" x="69" y="312"/><use href="#g8" x="77" y="312"/><use href="#g41" x="109" y="312"/><use href="#g7" x="117" y="312"/><use href="#g6" x="125" y="312"/><use href="#g41" x="157" y="312"/><use href="#g14" x="165" y="312"/><use href="#g41" x="197" y="312"/><use href="#g12" x="205" y="312"/><use href="#g41" x="237" y="312"/><use href="#g13" x="245" y="312"/><use href="#g41" x="61" y="327"/><use href="#g7" x="69" y="327"/><use href="#g9" x="77" y="327"/><use href="#g41" x="109" y="327"/><use href="#g7" x="117" y="327"/><use href="#g6" x="125" y="327"/><use href="#g41" x="157" y="327"/><use href="#g14" x="165" y="327"/><use href="#g41" x="197" y="327"/><use href="#g12" x="205" y="327"/><use href="#g27" x="237" y="327"/><use href="#g10" x="245" y="327"/><use href="#g41" x="61" y="342"/><use href="#g7" x="69" y="342"/><use href="#g10" x="77" y="342"/><use href="#g41" x="109" y="342"/><use href="#g7" x="117" y="342"/><use href="#g6" x="125" y="342"/><use href="#g41" x="157" y="342"/><use href="#g12" x="165" y="342"/><use href="#g41" x="197" y="342"/><use href="#g14" x="205" y="342"/><use href="#g41" x="61" y="357"/><use href="#g7" x="69" y="357"/><use href="#g11" x="77" y="357"/><use href="#g41" x="173" y="357"/><use href="#g10" x="181" y="357"/><use href="#g10" x="189" y="357"/><use href="#g41" x="77" y="402"/><use href="#g7" x="85" y="402"/><use href="#g12" x="93" y="402"/><use href="#g41" x="133" y="402"/><use href="#g7" x="141" y="402"/><use href="#g11" x="149" y="402"/><use href="#g41" x="165" y="417"/><use href="#g7" x="173" y="417"/><use href="#g10" x="181" y="417"/><use href="#g41" x="253" y="417"/><use href="#g7" x="261" y="417"/><use href="#g12" x="269" y="417"/><use href="#g41" x="93" y="432"/><use href="#g7" x="101" y="432"/><use href="#g10" x="109" y="432"/><use href="#g41" x="93" y="447"/><use href="#g7" x="101" y="447"/><use href="#g9" x="109" y="447"/><use href="#g41" x="93" y="462"/><use href="#g7" x="101" y="462"/><use href="#g8" x="109" y="462"/><use href="#g41" x="125" y="492"/><use href="#g7" x="133" y="492"/><use href="#g12" x="141" y="492"/><use href="#g41" x="77" y="537"/><use href="#g7" x="85" y="537"/><use href="#g13" x="93" y="537"/><use href="#g27" x="133" y="537"/><use href="#g9" x="141" y="537"/><use href="#g41" x="165" y="552"/><use href="#g7" x="173" y="552"/><use href="#g10" x="181" y="552"/><use href="#g41" x="253" y="552"/><use href="#g7" x="261" y="552"/><use href="#g13" x="269" y="552"/><use href="#g41" x="93" y="567"/><use href="#g7" x="101" y="567"/><use href="#g8" x="109" y="567"/><use href="#g41" x="93" y="582"/><use href="#g7" x="101" y="582"/><use href="#g9" x="109" y="582"/><use href="#g41" x="93" y="597"/><use href="#g7" x="101" y="597"/><use href="#g10" x="109" y="597"/><use href="#g41" x="125" y="627"/><use href="#g7" x="133" y="627"/><use href="#g13" x="141" y="627"/><use href="#g41" x="61" y="642"/><use href="#g7" x="69" y="642"/><use href="#g14" x="77" y="642"/><use href="#g41" x="117" y="642"/><use href="#g10" x="125" y="642"/><use href="#g8" x="133" y="642"/></g><g fill="#808080"><use href="#g26" x="101" y="57"/><use href="#g19" x="109" y="57"/><use href="#g24" x="117" y="57"/><use href="#g23" x="125" y="57"/><use href="#g20" x="133" y="57"/><use href="#g3" x="149" y="57"/><use href="#g33" x="229" y="57"/><use href="#g36" x="237" y="57"/><use href="#g39" x="245" y="57"/><use href="#g26" x="141" y="147"/><use href="#g19" x="149" y="147"/><use href="#g24" x="157" y="147"/><use href="#g23" x="165" y="147"/><use href="#g20" x="173" y="147"/><use href="#g3" x="189" y="147"/><use href="#g26" x="93" y="162"/><use href="#g19" x="101" y="162"/><use href="#g24" x="109" y="162"/><use href="#g23" x="117" y="162"/><use href="#g20" x="125" y="162"/><use href="#g3" x="141" y="162"/><use href="#g26" x="141" y="252"/><use href="#g19" x="149" y="252"/><use href="#g24" x="157" y="252"/><use href="#g23" x="165" y="252"/><use href="#g20" x="173" y="252"/><use href="#g3" x="189" y="252"/><use href="#g26" x="93" y="267"/><use href="#g19" x="101" y="267"/><use href="#g24" x="109" y="267"/><use href="#g23" x="117" y="267"/><use href="#g20" x="125" y="267"/><use href="#g3" x="141" y="267"/><use href="#g28" x="117" y="357"/><use href="#g32" x="125" y="357"/><use href="#g27" x="133" y="357"/><use href="#g38" x="141" y="357"/><use href="#g3" x="157" y="357"/><use href="#g26" x="93" y="417"/><use href="#g19" x="101" y="417"/><use href="#g24" x="109" y="417"/><use href="#g23" x="117" y="417"/><use href="#g20" x="125" y="417"/><use href="#g3" x="141" y="417"/><use href="#g26" x="93" y="552"/><use href="#g19" x="101" y="552"/><use href="#g24" x="109" y="552"/><use href="#g23" x="117" y="552"/><use href="#g20" x="125" y="552"/><use href="#g3" x="141" y="552"/><use href="#g14" x="22" y="42"/><use href="#g9" x="30" y="42"/><use href="#g14" x="22" y="57"/><use href="#g10" x="30" y="57"/><use href="#g14" x="22" y="72"/><use href="#g11" x="30" y="72"/><use href="#g14" x="22" y="87"/><use href="#g12" x="30" y="87"/><use href="#g14" x="22" y="102"/><use href="#g13" x="30" y="102"/><use href="#g14" x="22" y="117"/><use href="#g14" x="30" y="117"/><use href="#g14" x="22" y="132"/><use href="#g15" x="30" y="132"/><use href="#g15" x="22" y="147"/><use href="#g6" x="30" y="147"/><use href="#g15" x="22" y="162"/><use href="#g7" x="30" y="162"/><use href="#g15" x="22" y="177"/><use href="#g8" x="30" y="177"/><use href="#g15" x="22" y="192"/><use href="#g9" x="30" y="192"/><use href="#g15" x="22" y="207"/><use href="#g10" x="30" y="207"/><use href="#g15" x="22" y="222"/><use href="#g11" x="30" y="222"/><use href="#g15" x="22" y="237"/><use href="#g12" x="30" y="237"/><use href="#g15" x="22" y="252"/><use href="#g13" x="30" y="252"/><use href="#g15" x="22" y="267"/><use href="#g14" x="30" y="267"/><use href="#g15" x="22" y="282"/><use href="#g15" x="30" y="282"/><use href="#g7" x="14" y="297"/><use href="#g6" x="22" y="297"/><use href="#g6" x="30" y="297"/><use href="#g7" x="14" y="312"/><use href="#g6" x="22" y="312"/><use href="#g7" x="30" y="312"/><use href="#g7" x="14" y="327"/><use href="#g6" x="22" y="327"/><use href="#g8" x="30" y="327"/><use href="#g7" x="14" y="342"/><use href="#g6" x="22" y="342"/><use href="#g9" x="30" y="342"/><use href="#g7" x="14" y="357"/><use href="#g6" x="22" y="357"/><use href="#g10" x="30" y="357"/><use href="#g7" x="14" y="372"/><use href="#g6" x="22" y="372"/><use href="#g11" x="30" y="372"/><use href="#g7" x="14" y="387"/><use href="#g6" x="22" y="387"/><use href="#g12" x="30" y="387"/><use href="#g7" x="14" y="402"/><use href="#g6" x="22" y="402"/><use href="#g13" x="30" y="402"/><use href="#g7" x="14" y="417"/><use href="#g6" x="22" y="417"/><use href="#g14" x="30" y="417"/><use href="#g7" x="14" y="432"/><use href="#g6" x="22" y="432"/><use href="#g15" x="30" y="432"/><use href="#g7" x="14" y="447"/><use href="#g7" x="22" y="447"/><use href="#g6" x="30" y="447"/><use href="#g7" x="14" y="462"/><use href="#g7" x="22" y="462"/><use href="#g7" x="30" y="462"/><use href="#g7" x="14" y="477"/><use href="#g7" x="22" y="477"/><use href="#g8" x="30" y="477"/><use href="#g7" x="14" y="492"/><use href="#g7" x="22" y="492"/><use href="#g9" x="30" y="492"/><use href="#g7" x="14" y="507"/><use href="#g7" x="22" y="507"/><use href="#g10" x="30" y="507"/><use href="#g7" x="14" y="522"/><use href="#g7" x="22" y="522"/><use href="#g11" x="30" y="522"/><use href="#g7" x="14" y="537"/><use href="#g7" x="22" y="537"/><use href="#g12" x="30" y="537"/><use href="#g7" x="14" y="552"/><use href="#g7" x="22" y="552"/><use href="#g13" x="30" y="552"/><use href="#g7" x="14" y="567"/><use href="#g7" x="22" y="567"/><use href="#g14" x="30" y="567"/><use href="#g7" x="14" y="582"/><use href="#g7" x="22" y="582"/><use href="#g15" x="30" y="582"/><use href="#g7" x="14" y="597"/><use href="#g8" x="22" y="597"/><use href="#g6" x="30" y="597"/><use href="#g7" x="14" y="612"/><use href="#g8" x="22" y="612"/><use href="#g7" x="30" y="612"/><use href="#g7" x="14" y="627"/><use href="#g8" x="22" y="627"/><use href="#g8" x="30" y="627"/><use href="#g7" x="14" y="642"/><use href="#g8" x="22" y="642"/><use href="#g9" x="30" y="642"/></g></svg>
<div class="dot" style="top:46px"></div><div class="dot" style="top:61px"></div><div class="dot" style="top:76px"></div><div class="dot" style="top:91px"></div><div class="dot" style="top:106px"></div><div class="dot" style="top:151px"></div><div class="dot" style="top:166px"></div><div class="dot" style="top:196px"></div><div class="dot" style="top:211px"></div><div class="dot" style="top:256px"></div><div class="dot" style="top:271px"></div><div class="dot" style="top:301px"></div><div class="dot" style="top:316px"></div><div class="dot" style="top:331px"></div><div class="dot" style="top:346px"></div><div class="dot" style="top:361px"></div><div class="dot" style="top:406px"></div><div class="dot" style="top:421px"></div><div class="dot" style="top:436px"></div><div class="dot" style="top:451px"></div><div class="dot" style="top:466px"></div><div class="dot" style="top:496px"></div><div class="dot" style="top:541px"></div><div class="dot" style="top:556px"></div><div class="dot" style="top:571px"></div><div class="dot" style="top:586px"></div><div class="dot" style="top:601px"></div><div class="dot" style="top:631px"></div><div class="dot" style="top:646px"></div>
<div id="vsb"></div>
<div id="thumb"></div>
<svg style="left:785px;top:47px" width="8" height="8" viewBox="0 0 8 8"><path d="M0.8 6.2L3.75 3.2L6.7 6.2" fill="none" stroke="#555" stroke-width="2"/></svg>
<svg style="left:785px;top:677px" width="8" height="8" viewBox="0 0 8 8"><path d="M0.8 1.5L3.75 4.5L6.7 1.5" fill="none" stroke="#555" stroke-width="2"/></svg>
<div id="status"></div>
<div class="st" style="left:47px">0000282E</div>
<div class="ssep" style="left:104px"></div>
<div class="st" style="left:108px">mw_multipart_add_file_field:83 (21AF1F6342E)</div>
<div class="ssep" style="left:417px"></div>
<div class="ssep" style="left:430px"></div>
<div id="hsb"></div>
<div id="hthumb"></div>
<svg style="left:48px;top:693px" width="8" height="10" viewBox="0 0 8 10"><path d="M6.3 1.6L3.2 4.6L6.3 7.6" fill="none" stroke="#555" stroke-width="2"/></svg>
<svg style="left:768px;top:693px" width="8" height="10" viewBox="0 0 8 10"><path d="M1.7 1.6L4.8 4.6L1.7 7.6" fill="none" stroke="#555" stroke-width="2"/></svg>
<div id="bline"></div>
<div id="black"></div>
</body></html>
